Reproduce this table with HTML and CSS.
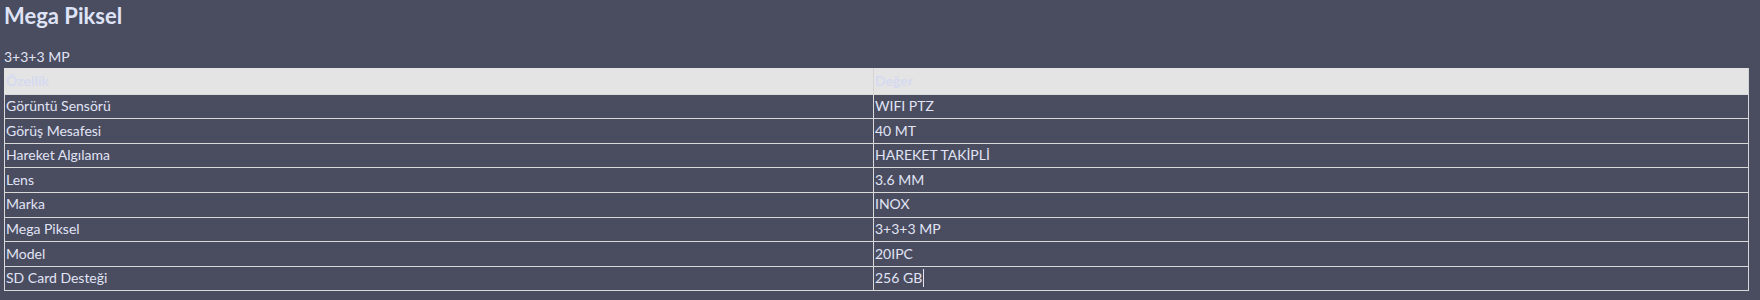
FILE: index.html
```html
<!DOCTYPE html>
<html lang="tr">
<head>
<meta charset="utf-8">
<title>Mega Piksel</title>
<link rel="stylesheet" href="styles.css">
</head>
<body>
<div class="page">
  <h1 class="title">Mega Piksel</h1>
  <p class="value">3+3+3 MP</p>
  <table class="specs">
    <thead>
      <tr><th class="col-key">Özellik</th><th>Değer</th></tr>
    </thead>
    <tbody>
      <tr><td>Görüntü Sensörü</td><td>WIFI PTZ</td></tr>
      <tr><td>Görüş Mesafesi</td><td>40 MT</td></tr>
      <tr><td>Hareket Algılama</td><td>HAREKET TAKİPLİ</td></tr>
      <tr><td>Lens</td><td>3.6 MM</td></tr>
      <tr><td>Marka</td><td>INOX</td></tr>
      <tr><td>Mega Piksel</td><td>3+3+3 MP</td></tr>
      <tr><td>Model</td><td>20IPC</td></tr>
      <tr><td>SD Card Desteği</td><td>256 GB<span class="caret"></span></td></tr>
    </tbody>
  </table>
</div>
</body>
</html>
```
FILE: styles.css
```css
html, body {
  margin: 0;
  padding: 0;
  background: #4a4c60;
}
body {
  font-family: "Lato", "Noto Sans", sans-serif;
  font-size: 14px;
  color: #e0e4f5;
}
.page {
  padding: 2px 11px 0 4px;
}
.title {
  margin: 0;
  font-size: 22px;
  font-weight: 700;
  line-height: 27px;
  color: #dfe3f6;
}
.value {
  margin: 17px 0 1px;
  line-height: 21px;
}
.specs {
  width: 100%;
  border-collapse: collapse;
  table-layout: fixed;
}
.specs th,
.specs td {
  border: 1px solid #d9d9d9;
  padding: 2.5px 1px;
  line-height: 18.6px;
  text-align: left;
  vertical-align: top;
}
.specs th {
  background: #e4e4e4;
  color: #d6daf0;
  font-weight: 700;
  padding-top: 3px;
  padding-bottom: 3px;
  border-top-color: #e4e4e4;
  border-left-color: #e4e4e4;
  border-right-color: #d4d4d4;
}
.specs .col-key {
  width: 866px;
}
.caret {
  display: inline-block;
  width: 1px;
  height: 18px;
  margin-left: 1px;
  background: #e0e4f5;
  vertical-align: -4px;
}
```
